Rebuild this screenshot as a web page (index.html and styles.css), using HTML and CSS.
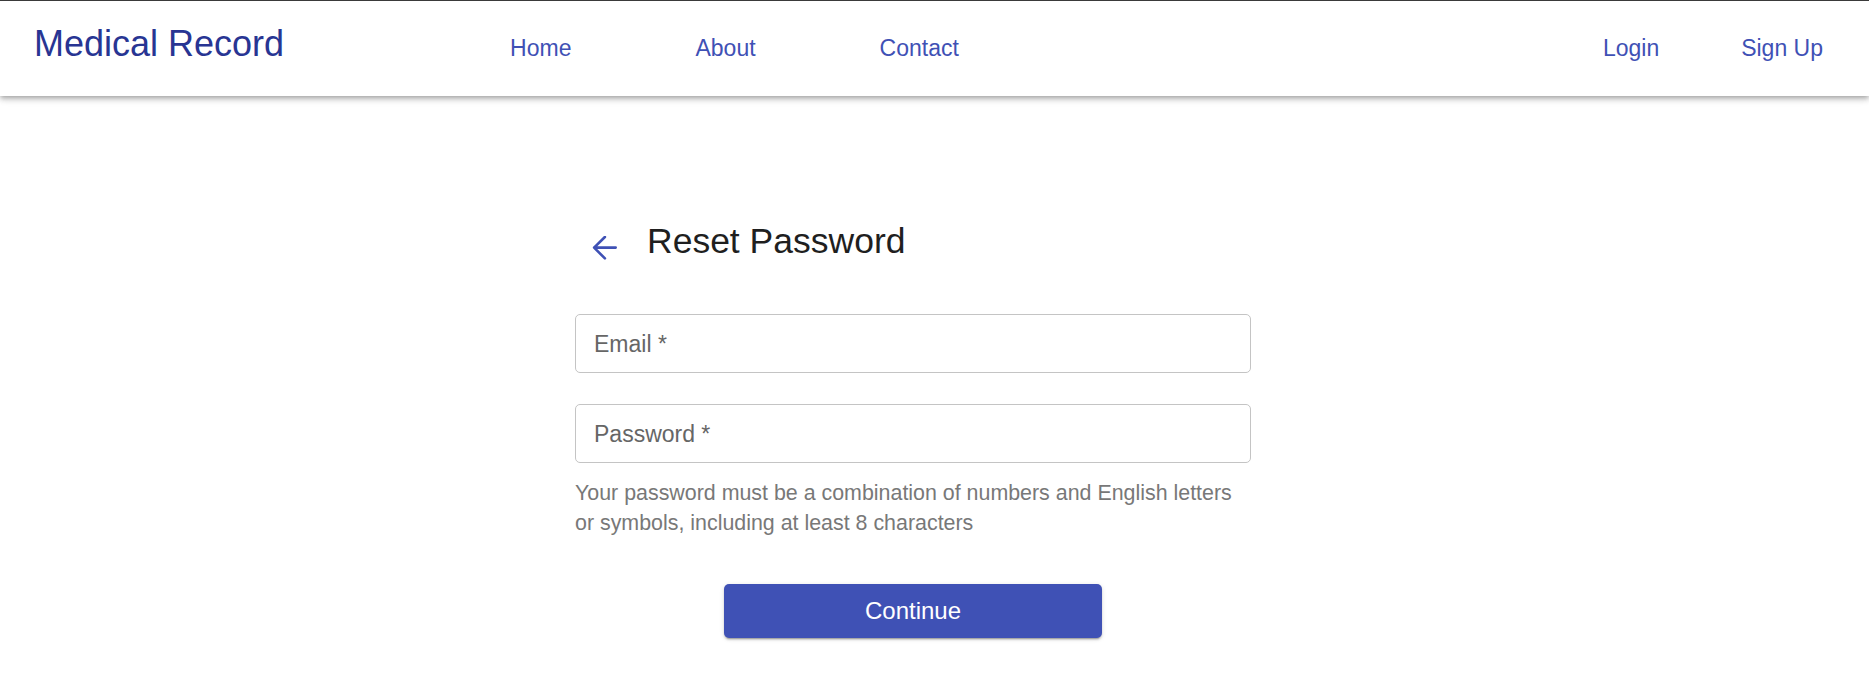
FILE: index.html
```html
<!DOCTYPE html>
<html lang="en">
<head>
<meta charset="utf-8">
<title>Medical Record - Reset Password</title>
<link rel="stylesheet" href="styles.css">
</head>
<body>
<header class="appbar">
  <div class="logo">Medical Record</div>
  <nav class="nav-main">
    <a class="nav-link" href="#">Home</a>
    <a class="nav-link" href="#">About</a>
    <a class="nav-link" href="#">Contact</a>
  </nav>
  <nav class="nav-auth">
    <a class="nav-link" href="#">Login</a>
    <a class="nav-link" href="#">Sign Up</a>
  </nav>
</header>
<main class="page">
  <form class="form">
    <div class="title-row">
      <svg class="back-icon" viewBox="0 0 24 24" width="24" height="24" aria-hidden="true">
        <path d="M23.2 11.6H1.6M12.4 1L1.6 11.6L12.4 22.4" fill="none" stroke="#3f51b5" stroke-width="2.6" stroke-linecap="round" stroke-linejoin="round"/>
      </svg>
      <h1 class="title">Reset Password</h1>
    </div>
    <div class="field">
      <span class="field-label">Email *</span>
    </div>
    <div class="field field-second">
      <span class="field-label">Password *</span>
    </div>
    <p class="helper">Your password must be a combination of numbers and English letters or symbols, including at least 8 characters</p>
    <div class="actions">
      <button type="button" class="btn-primary">Continue</button>
    </div>
  </form>
</main>
</body>
</html>
```

FILE: styles.css
```css
* {
  box-sizing: border-box;
}

html, body {
  margin: 0;
  padding: 0;
  background: #ffffff;
  font-family: "Liberation Sans", Arial, sans-serif;
}

.appbar {
  display: flex;
  align-items: baseline;
  height: 96px;
  padding: 22px 46px 0 34px;
  border-top: 1px solid #3a3a3a;
  background: #ffffff;
  box-shadow: 0 2px 4px -1px rgba(0,0,0,0.2), 0 4px 5px 0 rgba(0,0,0,0.14), 0 1px 10px 0 rgba(0,0,0,0.12);
  position: relative;
  z-index: 1;
}

.logo {
  font-size: 36px;
  color: #283593;
  line-height: normal;
}

.nav-main {
  display: flex;
  align-items: baseline;
  gap: 124px;
  margin-left: 226px;
}

.nav-auth {
  display: flex;
  align-items: baseline;
  gap: 82px;
  margin-left: auto;
}

.nav-link {
  font-size: 23px;
  color: #3f51b5;
  text-decoration: none;
  line-height: normal;
}

.page {
  display: flex;
  justify-content: center;
  padding: 125px 43px 40px 0;
}

.form {
  width: 676px;
}

.title-row {
  display: flex;
  align-items: flex-start;
}

.back-icon {
  display: block;
  width: 25px;
  height: 24px;
  margin: 15px 0 0 17px;
}

.title {
  margin: 0 0 0 30px;
  font-size: 35.5px;
  font-weight: 400;
  line-height: normal;
  color: #1f1f1f;
}

.field {
  display: flex;
  align-items: center;
  height: 59px;
  margin-top: 52px;
  padding: 2px 0 0 18px;
  border: 1px solid #c4c4c4;
  border-radius: 5px;
}

.field-second {
  margin-top: 31px;
}

.field-label {
  font-size: 23px;
  color: #666666;
}

.helper {
  margin: 15px 0 0;
  font-size: 21.4px;
  line-height: 30px;
  color: #787878;
}

.actions {
  display: flex;
  justify-content: center;
  margin-top: 46px;
}

.btn-primary {
  width: 378px;
  height: 54px;
  border: none;
  border-radius: 5px;
  background: #3f51b5;
  color: #ffffff;
  font-family: "Liberation Sans", Arial, sans-serif;
  font-size: 24px;
  cursor: pointer;
  box-shadow: 0 3px 1px -2px rgba(0,0,0,0.2), 0 2px 2px 0 rgba(0,0,0,0.14), 0 1px 5px 0 rgba(0,0,0,0.12);
}
```
